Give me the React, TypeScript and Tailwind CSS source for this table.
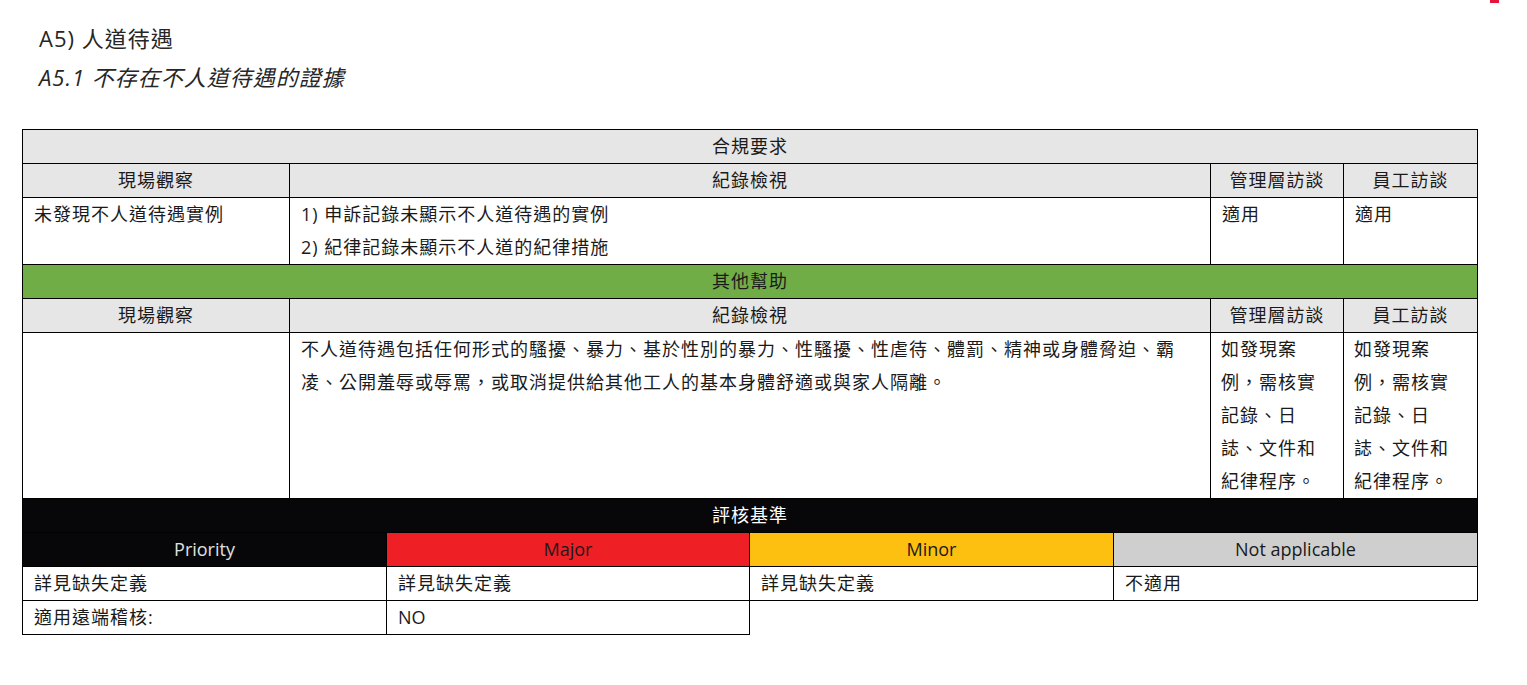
const font = { fontFamily: '"Open Sans","Noto Sans CJK TC",sans-serif' }

function Cell({ className = '', children }: { className?: string; children?: React.ReactNode }) {
  return <div className={`border-r border-b border-black leading-[33px] ${className}`}>{children}</div>
}

const topCols = 'grid grid-cols-[267px_921px_133px_134px]'
const bottomCols = 'grid grid-cols-[364px_363px_364px_364px]'

function HeaderRow() {
  return (
    <div className={`${topCols} bg-[#e7e6e6]`}>
      <Cell className="text-center">現場觀察</Cell>
      <Cell className="text-center">紀錄檢視</Cell>
      <Cell className="text-center">管理層訪談</Cell>
      <Cell className="text-center">員工訪談</Cell>
    </div>
  )
}

export default function App() {
  const verify = (
    <>
      如發現案<br />例，需核實<br />記錄、日<br />誌、文件和<br />紀律程序。
    </>
  )

  return (
    <div className="relative min-h-[685px] bg-white text-[#1a1a1a]" style={font}>
      <div className="absolute top-0 left-[1490px] h-[3px] w-[9px] bg-[#e6153d]" />

      <div className="pl-[39px] pt-[23px] text-[22px] leading-[30px] tracking-[1px] text-[#262626]">
        <div>A5) 人道待遇</div>
        <div className="mt-[9px] italic">A5.1 不存在不人道待遇的證據</div>
      </div>

      <div className="ml-[22px] mt-[37px] w-[1456px] text-[18px] tracking-[1px]">
        <div className="border-l border-t border-black">
          <div className="bg-[#e7e6e6]">
            <Cell className="text-center">合規要求</Cell>
          </div>
          <HeaderRow />
          <div className={topCols}>
            <Cell className="px-[11px]">未發現不人道待遇實例</Cell>
            <Cell className="px-[11px]">
              <div>1) 申訴記錄未顯示不人道待遇的實例</div>
              <div>2) 紀律記錄未顯示不人道的紀律措施</div>
            </Cell>
            <Cell className="px-[11px]">適用</Cell>
            <Cell className="px-[11px]">適用</Cell>
          </div>
          <div className="bg-[#70ad47]">
            <Cell className="text-center">其他幫助</Cell>
          </div>
          <HeaderRow />
          <div className={topCols}>
            <Cell className="px-[11px]" />
            <Cell className="px-[11px]">
              不人道待遇包括任何形式的騷擾、暴力、基於性別的暴力、性騷擾、性虐待、體罰、精神或身體脅迫、霸
              <br />
              凌、公開羞辱或辱罵，或取消提供給其他工人的基本身體舒適或與家人隔離。
            </Cell>
            <Cell className="px-[10px]">{verify}</Cell>
            <Cell className="px-[10px]">{verify}</Cell>
          </div>
          <div className="bg-[#070709] text-white">
            <Cell className="text-center">評核基準</Cell>
          </div>
          <div className={`${bottomCols} tracking-normal`}>
            <Cell className="bg-[#070709] text-center text-[#e0e0e0]">Priority</Cell>
            <Cell className="bg-[#ef1f26] text-center text-[#1a1a1a]">Major</Cell>
            <Cell className="bg-[#fdc010] text-center text-[#1a1a1a]">Minor</Cell>
            <Cell className="bg-[#d0cfd0] text-center text-[#1a1a1a]">Not applicable</Cell>
          </div>
          <div className={bottomCols}>
            <Cell className="px-[11px]">詳見缺失定義</Cell>
            <Cell className="px-[11px]">詳見缺失定義</Cell>
            <Cell className="px-[11px]">詳見缺失定義</Cell>
            <Cell className="px-[11px]">不適用</Cell>
          </div>
        </div>
        <div className="grid w-[728px] grid-cols-[364px_363px] border-l border-black">
          <Cell className="px-[11px]">適用遠端稽核:</Cell>
          <Cell className="px-[11px] tracking-normal">NO</Cell>
        </div>
      </div>
    </div>
  )
}
